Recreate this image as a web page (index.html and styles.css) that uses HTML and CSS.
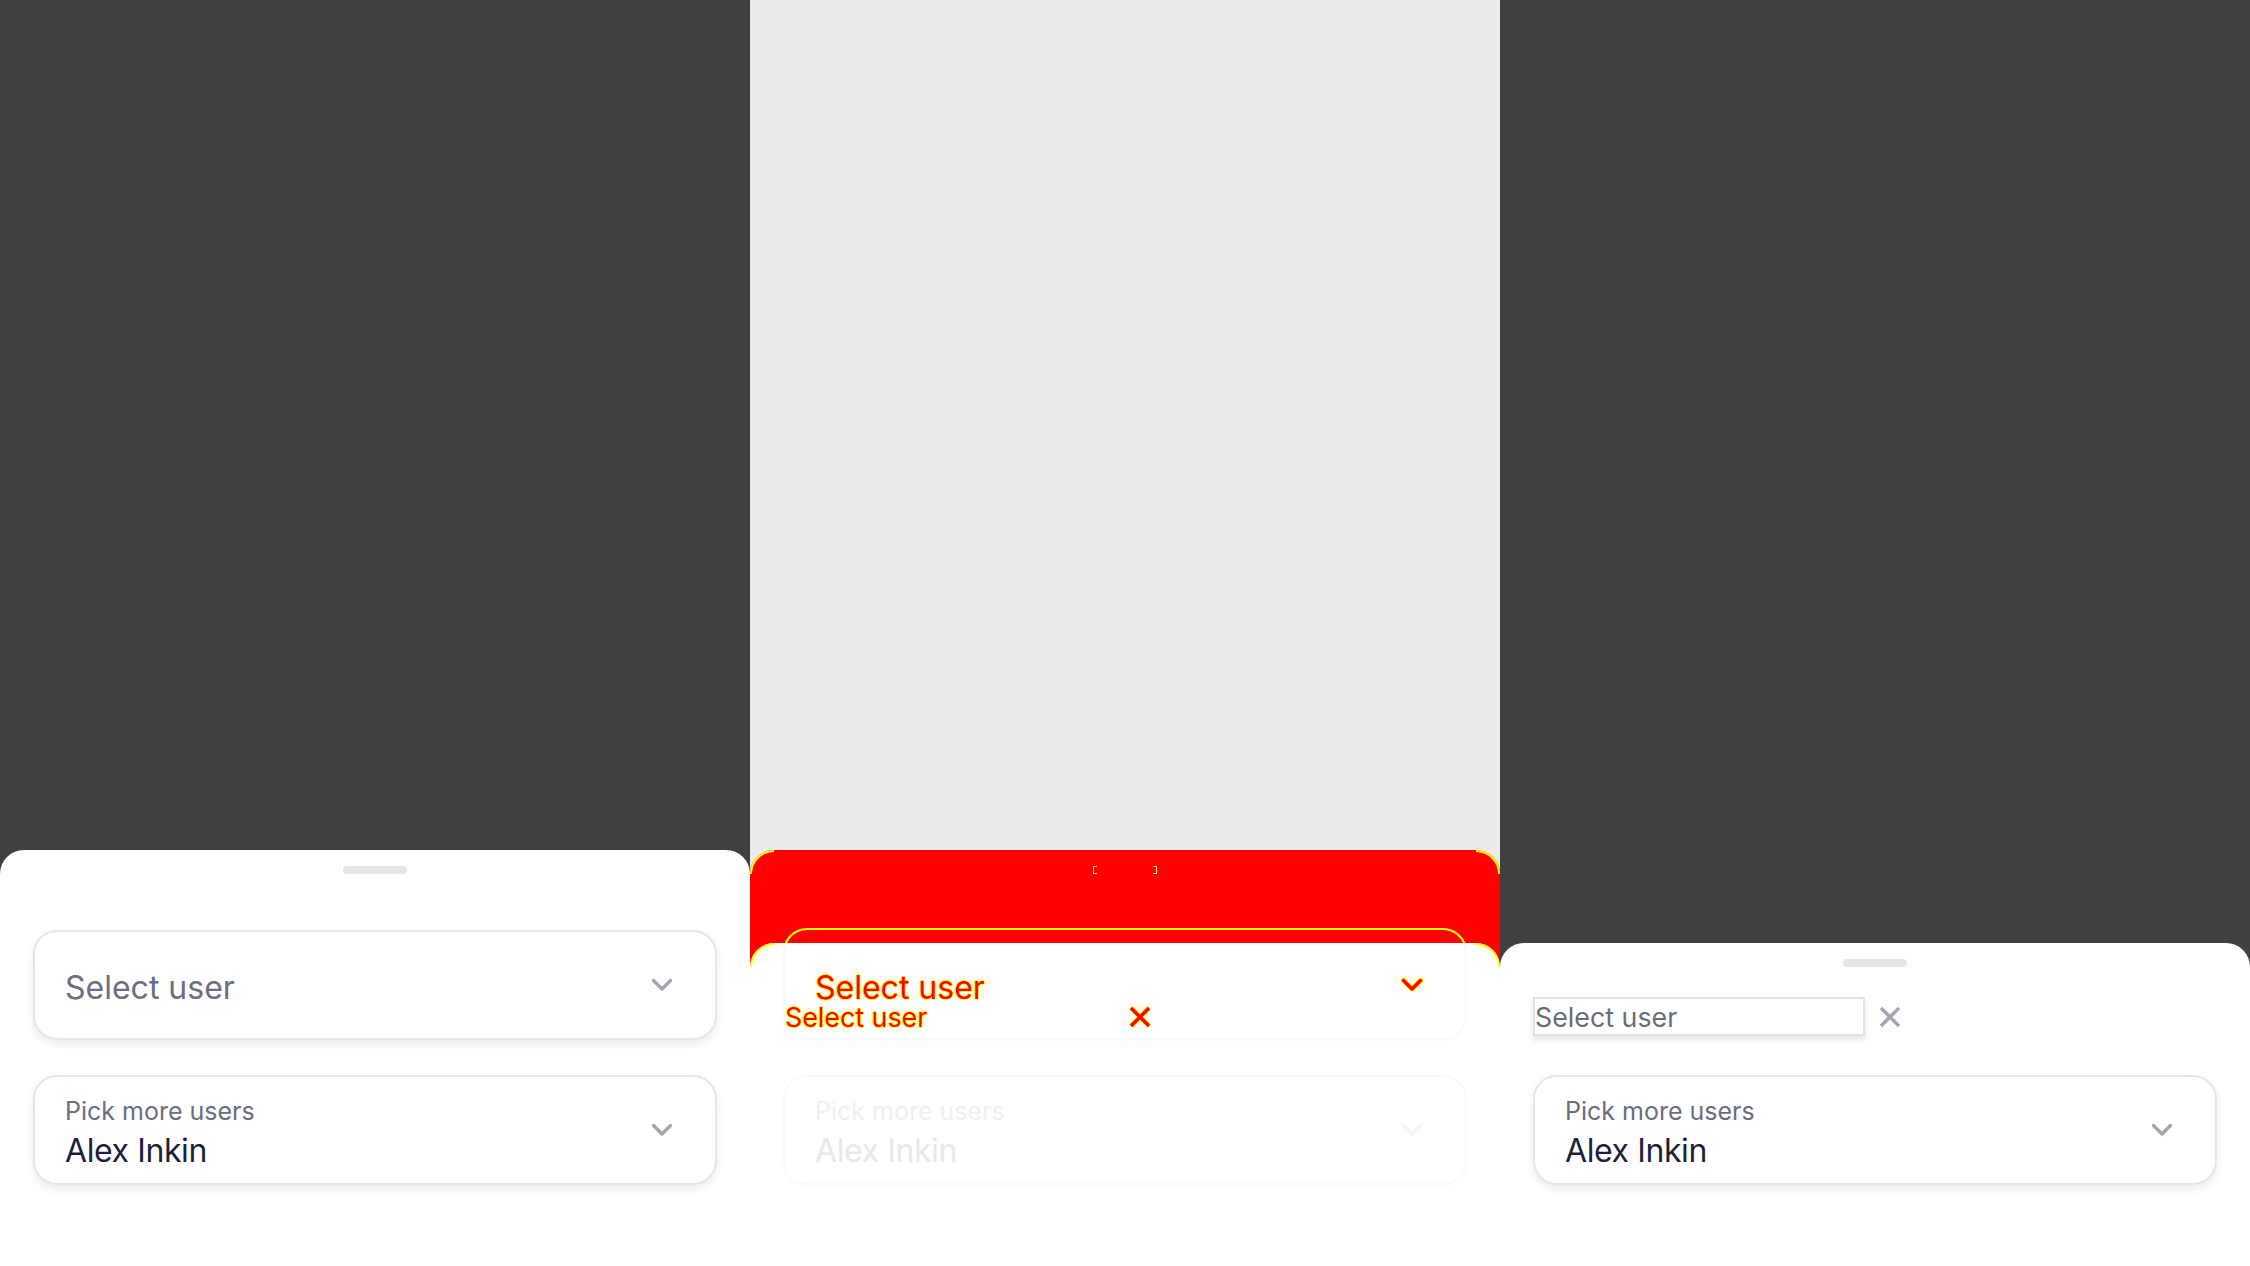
FILE: index.html
```html
<!DOCTYPE html>
<html lang="en">
<head>
<meta charset="utf-8">
<title>Select user sheet diff</title>
<link rel="stylesheet" href="styles.css">
</head>
<body>
<div class="board">
  <section class="panel panel-dark">
    <div class="sheet sheet-left">
      <div class="handle"></div>
      <div class="field field-first">
        <span class="field-text">Select user</span>
        <svg class="chevron" viewBox="0 0 24 16"><polyline points="3.5,3.5 12,12 20.5,3.5"/></svg>
      </div>
      <div class="field field-second">
        <div class="field-stack">
          <span class="field-label">Pick more users</span>
          <span class="field-value">Alex Inkin</span>
        </div>
        <svg class="chevron" viewBox="0 0 24 16"><polyline points="3.5,3.5 12,12 20.5,3.5"/></svg>
      </div>
    </div>
  </section>

  <section class="panel panel-diff">
    <div class="diff-old">
      <div class="diff-handle"><span class="bracket bracket-l"></span><span class="bracket bracket-r"></span></div>
      <div class="diff-outline"></div>
      <div class="diff-new">
        <div class="layer layer-old">
          <div class="field field-first ghost">
            <span class="field-text diff-text">Select user</span>
            <svg class="chevron chevron-diff" viewBox="0 0 24 16"><polyline class="aa" points="3.5,3.5 12,12 20.5,3.5"/><polyline points="3.5,3.5 12,12 20.5,3.5"/></svg>
          </div>
          <div class="field field-second ghost faded">
            <div class="field-stack">
              <span class="field-label">Pick more users</span>
              <span class="field-value">Alex Inkin</span>
            </div>
            <svg class="chevron" viewBox="0 0 24 16"><polyline points="3.5,3.5 12,12 20.5,3.5"/></svg>
          </div>
        </div>
        <div class="layer layer-new">
          <div class="input-row input-row-diff">
            <div class="input ghost-input"><span class="diff-text">Select user</span></div>
            <svg class="xicon xicon-diff" viewBox="0 0 24 24"><path class="aa" d="M3 3 L21 21 M21 3 L3 21"/><path d="M3 3 L21 21 M21 3 L3 21"/></svg>
          </div>
        </div>
      </div>
    </div>
  </section>

  <section class="panel panel-dark">
    <div class="sheet sheet-right">
      <div class="handle"></div>
      <div class="input-row">
        <div class="input">Select user</div>
        <svg class="xicon" viewBox="0 0 24 24"><path d="M3 3 L21 21 M21 3 L3 21"/></svg>
      </div>
      <div class="field field-second">
        <div class="field-stack">
          <span class="field-label">Pick more users</span>
          <span class="field-value">Alex Inkin</span>
        </div>
        <svg class="chevron" viewBox="0 0 24 16"><polyline points="3.5,3.5 12,12 20.5,3.5"/></svg>
      </div>
    </div>
  </section>
</div>
</body>
</html>
```

FILE: styles.css
```css
body {
  margin: 0;
  font-family: Inter, "Noto Sans", sans-serif;
}

.board {
  display: grid;
  grid-template-columns: repeat(3, 750px);
  height: 1266px;
  overflow: hidden;
}

.panel {
  display: flex;
  flex-direction: column;
  justify-content: flex-end;
  height: 1266px;
}

.panel-dark { background: #404040; }
.panel-diff { background: #ebebeb; }

/* ---------- sheet ---------- */
.sheet {
  box-sizing: border-box;
  background: #fff;
  border-radius: 24px 24px 0 0;
  padding: 16px 33px 0;
}
.sheet-left { height: 416px; }
.sheet-right { height: 323px; }

.handle {
  width: 64px;
  height: 8px;
  border-radius: 4px;
  background: #e5e5e5;
  margin: 0 auto;
}

/* ---------- textfield ---------- */
.field {
  box-sizing: border-box;
  height: 110px;
  display: flex;
  align-items: center;
  border: 2px solid #e6e6e6;
  border-radius: 24px;
  background: #fff;
  box-shadow: 0 4px 8px rgba(0, 0, 0, 0.08);
  padding: 0 41px 0 30px;
}
.sheet-left .field-first { margin-top: 56px; }
.field-second { margin-top: 35px; }
.sheet-right .field-second { margin-top: 39px; }

.field-text {
  flex: 1;
  font-size: 32px;
  line-height: 40px;
  color: #6b6d80;
  padding-top: 5px;
}

.field-stack {
  flex: 1;
  align-self: stretch;
  display: flex;
  flex-direction: column;
  padding-top: 19px;
}
.field-label {
  font-size: 25px;
  line-height: 30px;
  color: #6b6d80;
}
.field-value {
  font-size: 32px;
  line-height: 40px;
  color: #1b1f3b;
  letter-spacing: -0.4px;
  margin-top: 5px;
}

.chevron {
  width: 24px;
  height: 16px;
  flex: none;
}
.chevron polyline {
  fill: none;
  stroke: #a4a5b1;
  stroke-width: 3.5;
  stroke-linecap: round;
  stroke-linejoin: round;
}

/* ---------- native-like input ---------- */
.input-row {
  display: flex;
  align-items: center;
  gap: 13px;
  height: 39px;
  margin-top: 30px;
}
.input {
  box-sizing: border-box;
  width: 332px;
  height: 39px;
  border: 2px solid #e3e3e3;
  box-shadow: 0 4px 6px rgba(0, 0, 0, 0.1);
  font-size: 26.8px;
  line-height: 36px;
  color: #6c6c74;
  white-space: nowrap;
}
.xicon {
  width: 24px;
  height: 24px;
  flex: none;
}
.xicon path {
  fill: none;
  stroke: #a4a5b1;
  stroke-width: 3.5;
}

/* ---------- diff panel ---------- */
.diff-old {
  position: relative;
  box-sizing: border-box;
  height: 416px;
  background: #ff0000;
  border-radius: 24px 24px 0 0;
  padding-top: 16px;
  display: flex;
  flex-direction: column;
}
.diff-old::before,
.diff-old::after,
.diff-new::before,
.diff-new::after {
  content: "";
  position: absolute;
  top: 0;
  width: 24px;
  height: 24px;
  box-sizing: border-box;
  border-top: 2px solid #ffff00;
  z-index: 3;
}
.diff-old::before,
.diff-new::before {
  left: 0;
  border-left: 2px solid #ffff00;
  border-top-left-radius: 24px;
}
.diff-old::after,
.diff-new::after {
  right: 0;
  border-right: 2px solid #ffff00;
  border-top-right-radius: 24px;
}

.diff-handle {
  width: 64px;
  height: 8px;
  margin: 0 auto;
  display: flex;
  justify-content: space-between;
}
.bracket {
  box-sizing: border-box;
  width: 4px;
  height: 8px;
  border: 1px solid #ffff00;
}
.bracket-l { border-right: 0; }
.bracket-r { border-left: 0; }

.diff-outline {
  position: absolute;
  top: 78px;
  left: 33px;
  right: 33px;
  height: 40px;
  box-sizing: border-box;
  border: 2px solid #ffff00;
  border-bottom: 0;
  border-radius: 24px 24px 0 0;
}

.diff-new {
  position: relative;
  z-index: 1;
  margin-top: auto;
  height: 323px;
  background: #fff;
  border-radius: 24px 24px 0 0;
  overflow: hidden;
  display: grid;
  grid-template-rows: 100%;
}
.layer {
  grid-area: 1 / 1;
  padding: 0 33px;
}
.layer-new { padding-top: 54px; }
.input-row-diff { margin-top: 0; }

.field.ghost {
  background: transparent;
  border-color: #fafafa;
  box-shadow: 0 4px 8px rgba(0, 0, 0, 0.01);
}
.layer-old .field-first { margin-top: -13px; }

.faded .field-label { color: #f0f0f2; }
.faded .field-value { color: #e8e8ea; }
.faded .chevron polyline { stroke: #f5f5f6; }

.diff-text {
  color: #ff0000;
  text-shadow: 1px 0 #ffff00, -1px 0 #ffff00, 0 1px #ffff00, 0 -1px #ffff00;
}

.ghost-input {
  border-color: transparent;
  box-shadow: none;
}

.chevron-diff polyline { stroke: #ff0000; }
.chevron-diff polyline.aa { stroke: #ffff00; stroke-width: 5.5; }
.xicon-diff path { stroke: #ff0000; }
.xicon-diff path.aa { stroke: #ffff00; stroke-width: 5.5; }
```
